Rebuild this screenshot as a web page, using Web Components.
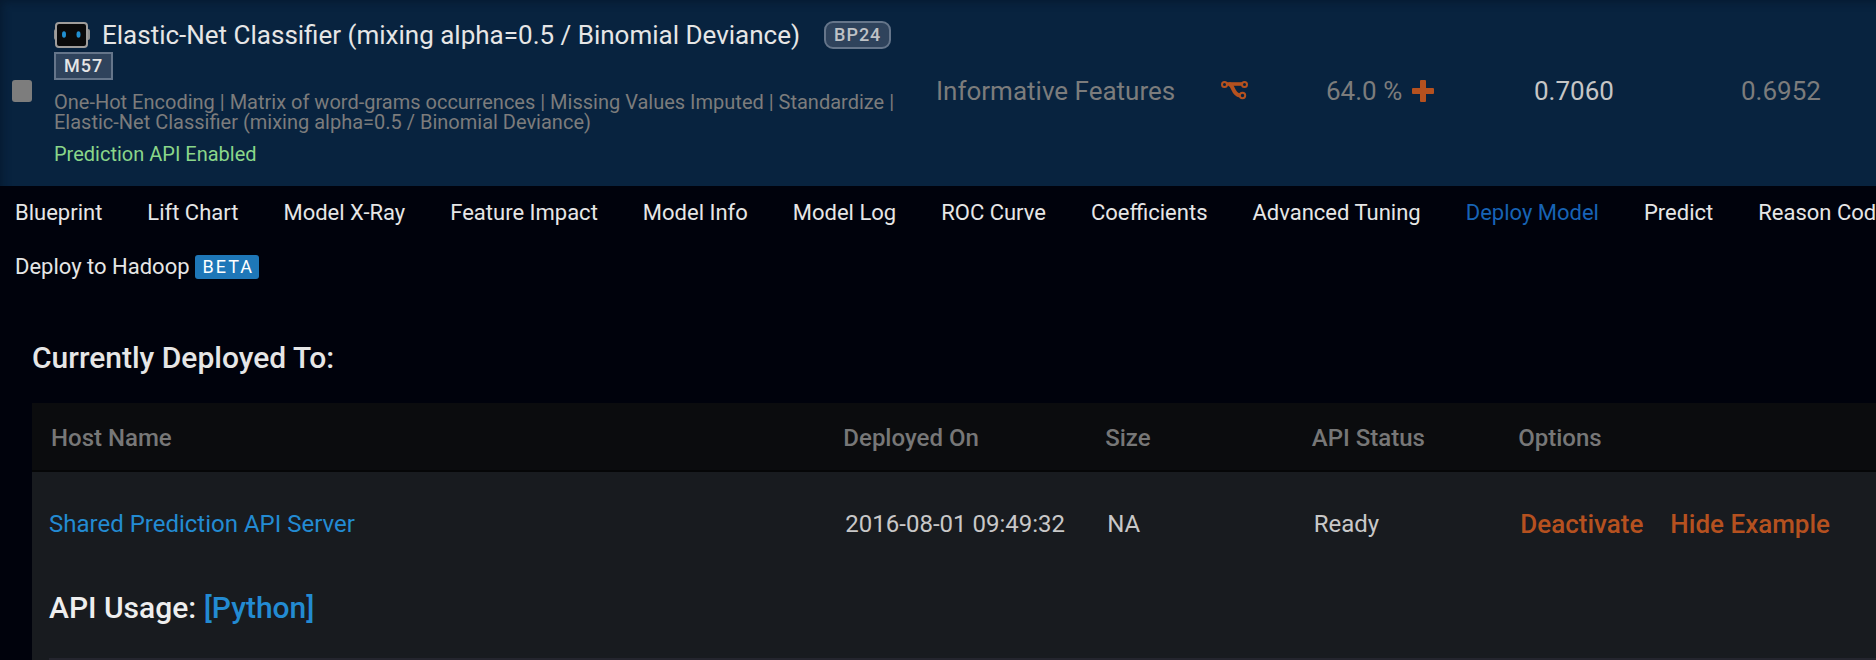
<!DOCTYPE html>
<html lang="en">
<head>
<meta charset="utf-8">
<title>Leaderboard model</title>
<style>
  html, body { margin: 0; background: #00020c; }
  body { font-family: Roboto, "Noto Sans", sans-serif; color: #e6e6e6; min-height: 100vh; overflow-x: hidden; }
</style>
</head>
<body>
<model-page></model-page>
<script>
const define = (name, html) => {
  const template = document.createElement('template');
  template.innerHTML = html;
  customElements.define(name, class extends HTMLElement {
    constructor() {
      super();
      this.attachShadow({ mode: 'open' }).append(template.content.cloneNode(true));
    }
  });
};

define('model-badge', `
  <style>
    :host { display: inline-block; box-sizing: border-box; height: 28px; padding: 0 8px; border: 2px solid #65758a;
      background: #2f435c; color: #e6e6e6; font-size: 18px; font-weight: 500; line-height: 24px; letter-spacing: 1px; }
    :host([kind=blueprint]) { border-radius: 9px; color: #bfc2c6; }
    :host([kind=beta]) { border: 0; height: 24px; border-radius: 3px; background: #1e77b8; color: #fff; font-weight: 400; letter-spacing: 2px; padding: 0 5px 0 8px; }
  </style><slot></slot>`);

define('robot-icon', `
  <style>:host { display: block; width: 36px; height: 26px; } svg { display: block; }</style>
  <svg width="36" height="26" viewBox="0 0 36 26" aria-hidden="true">
    <rect x="0" y="7" width="36" height="11" rx="2" fill="#8f8f8f"/>
    <rect x="2" y="1" width="31" height="24" rx="3" fill="#0a0a0b" stroke="#a09d9b" stroke-width="2"/>
    <ellipse cx="10" cy="12.5" rx="2" ry="3.3" fill="#218fd0"/>
    <ellipse cx="24.5" cy="12.5" rx="2" ry="3.3" fill="#218fd0"/>
  </svg>`);

define('branch-icon', `
  <style>:host { display: block; width: 28px; height: 20px; } svg { display: block; }</style>
  <svg width="28" height="20" viewBox="0 0 28 20" fill="none" stroke="#b5511f" aria-hidden="true">
    <path d="M6 3H22" stroke-width="3.6"/>
    <path d="M8 3C13 4 11 13 19 14.500" stroke-width="4"/>
    <g stroke-width="2"><circle cx="3.500" cy="3.500" r="2.500"/><circle cx="23.500" cy="3.500" r="2.500"/><circle cx="21.500" cy="14.500" r="2.700"/></g>
  </svg>`);

define('model-row', `
  <style>
    :host { display: grid; grid-template-columns: 54px 882fr 285fr 105fr 208fr 207fr 135fr; align-items: center;
      box-sizing: border-box; min-height: 186px; padding-bottom: 4px; background: #08233f; box-shadow: inset 8px 8px 8px -6px #061a30;
      color: #7c7c7c; font-size: 26px; line-height: 30px; }
    input { appearance: none; width: 20px; height: 22px; margin: 0 0 0 12px; display: block; background: #7d7d7d; border-radius: 3px; }
    .info { padding: 19px 32px 18px 0; }
    .title { display: flex; align-items: center; color: #e6e6e6; }
    h1 { font: inherit; margin: 0 24px 0 12px; white-space: nowrap; }
    model-badge { flex: none; }
    .number { display: block; width: max-content; margin-top: 2px; }
    p { margin: 12px 0 0; font-size: 20px; line-height: 20px; }
    .state { color: #8ad68a; margin-top: 12px; }
    .amount { display: flex; align-items: center; gap: 10px; white-space: nowrap; }
    button { border: 0; padding: 0; background: none; display: block; }
    svg { display: block; }
    .score { color: #c6c6c6; }
  </style>
  <input type="checkbox" aria-label="Select model">
  <div class="info">
    <div class="title"><robot-icon></robot-icon><h1>Elastic-Net Classifier (mixing alpha=0.5 / Binomial Deviance)</h1><model-badge kind="blueprint">BP24</model-badge></div>
    <model-badge class="number">M57</model-badge>
    <p>One-Hot Encoding | Matrix of word-grams occurrences | Missing Values Imputed | Standardize | Elastic-Net Classifier (mixing alpha=0.5 / Binomial Deviance)</p>
    <p class="state">Prediction API Enabled</p>
  </div>
  <div>Informative Features</div>
  <branch-icon></branch-icon>
  <div class="amount"><span>64.0 %</span><button aria-label="Add sample size"><svg width="22" height="22" viewBox="0 0 22 22" fill="#b5511f"><rect x="8" width="6" height="22" rx="1"/><rect y="8" width="22" height="6" rx="1"/></svg></button></div>
  <div class="score">0.7060</div>
  <div>0.6952</div>`);

define('tab-link', `
  <style>
    :host { display: block; }
    a { display: flex; gap: 5px; align-items: center; color: inherit; text-decoration: none; white-space: nowrap; }
    :host([active]) a { color: #1763b5; }
  </style><a href="#"><slot></slot></a>`);

define('model-tabs', `
  <style>
    :host { display: block; background: #00020c; }
    nav { display: flex; flex-wrap: wrap; column-gap: 45px; margin-right: -60px; padding: 0 0 0 15px; font-size: 22px; line-height: 54px; }
  </style><nav aria-label="Model views"><slot></slot></nav>`);

define('deploy-table', `
  <style>
    :host { display: block; padding: 0 0 0 32px; }
    h2, h3 { margin: 0; font-weight: 500; font-size: 30px; line-height: 36px; }
    h2 { padding: 46px 0 27px; }
    table { width: 100%; border-collapse: separate; border-spacing: 0; table-layout: fixed; background: #181b1f; font-size: 24px; line-height: 28px; text-align: left; }
    th { box-sizing: border-box; background: #0b0c0e; color: #777; font-weight: 500; height: 69px; padding: 2px 0 0 19px; border-bottom: 2px solid #050607; }
    td { height: 104px; padding: 0 0 0 17px; color: #c8c8c8; }
    th + th { padding-left: 0; } td + td { padding-left: 2px; }
    col:nth-child(1) { width: 44%; } col:nth-child(2) { width: 14.2%; } col:nth-child(3) { width: 11.2%; } col:nth-child(4) { width: 11.2%; }
    a { color: #238bd2; text-decoration: none; }
    .actions { display: flex; gap: 27px; white-space: nowrap; }
    button { border: 0; padding: 0; background: none; color: #b5511f; font: 500 26px/28px Roboto, sans-serif; }
    .usage { height: auto; padding: 14px 0 0 17px; color: #eee; }
    .code { margin-top: 32px; border-top: 2px solid #24252e; }
  </style>
  <h2>Currently Deployed To:</h2>
  <table>
    <colgroup><col><col><col><col><col></colgroup>
    <thead><tr><th>Host Name</th><th>Deployed On</th><th>Size</th><th>API Status</th><th>Options</th></tr></thead>
    <tbody>
      <tr><td><a href="#">Shared Prediction API Server</a></td><td>2016-08-01 09:49:32</td><td>NA</td><td>Ready</td>
        <td><div class="actions"><button>Deactivate</button><button>Hide Example</button></div></td></tr>
      <tr><td class="usage" colspan="5"><h3>API Usage: <a href="#">[Python]</a></h3><div class="code"></div></td></tr>
    </tbody>
  </table>`);

define('model-page', `
  <style>:host { display: block; overflow: hidden; }</style>
  <model-row></model-row>
  <model-tabs>
    <tab-link>Blueprint</tab-link><tab-link>Lift Chart</tab-link><tab-link>Model X-Ray</tab-link><tab-link>Feature Impact</tab-link>
    <tab-link>Model Info</tab-link><tab-link>Model Log</tab-link><tab-link>ROC Curve</tab-link><tab-link>Coefficients</tab-link>
    <tab-link>Advanced Tuning</tab-link><tab-link active>Deploy Model</tab-link><tab-link>Predict</tab-link><tab-link>Reason Codes</tab-link>
    <tab-link>Deploy to Hadoop <model-badge kind="beta">BETA</model-badge></tab-link>
  </model-tabs>
  <deploy-table></deploy-table>`);
</script>
</body>
</html>
